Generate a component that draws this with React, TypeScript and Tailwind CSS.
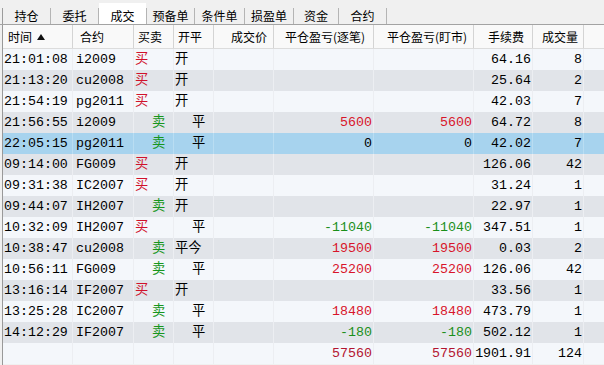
import React from 'react';

type Side = 'buy' | 'sell';
type Trade = {
  time?: string;
  symbol?: string;
  side?: Side;
  offset?: string;
  price?: string;
  pnlTrade?: number;
  pnlMarket?: number;
  fee: string;
  volume: number;
};

const tabs = [
  { label: '持仓', w: 'w-[47px]' },
  { label: '委托', w: 'w-[47px]' },
  { label: '成交', w: 'w-[47px]', active: true },
  { label: '预备单', w: 'w-[47px]' },
  { label: '条件单', w: 'w-[49px]' },
  { label: '损盈单', w: 'w-[48px]' },
  { label: '资金', w: 'w-[44px]' },
  { label: '合约', w: 'w-[47px]' },
];

const trades: Trade[] = [
  { time: '21:01:08', symbol: 'i2009', side: 'buy', offset: '开', fee: '64.16', volume: 8 },
  { time: '21:13:20', symbol: 'cu2008', side: 'buy', offset: '开', fee: '25.64', volume: 2 },
  { time: '21:54:19', symbol: 'pg2011', side: 'buy', offset: '开', fee: '42.03', volume: 7 },
  { time: '21:56:55', symbol: 'i2009', side: 'sell', offset: '平', pnlTrade: 5600, pnlMarket: 5600, fee: '64.72', volume: 8 },
  { time: '22:05:15', symbol: 'pg2011', side: 'sell', offset: '平', pnlTrade: 0, pnlMarket: 0, fee: '42.02', volume: 7 },
  { time: '09:14:00', symbol: 'FG009', side: 'buy', offset: '开', fee: '126.06', volume: 42 },
  { time: '09:31:38', symbol: 'IC2007', side: 'buy', offset: '开', fee: '31.24', volume: 1 },
  { time: '09:44:07', symbol: 'IH2007', side: 'sell', offset: '开', fee: '22.97', volume: 1 },
  { time: '10:32:09', symbol: 'IH2007', side: 'buy', offset: '平', pnlTrade: -11040, pnlMarket: -11040, fee: '347.51', volume: 1 },
  { time: '10:38:47', symbol: 'cu2008', side: 'sell', offset: '平今', pnlTrade: 19500, pnlMarket: 19500, fee: '0.03', volume: 2 },
  { time: '10:56:11', symbol: 'FG009', side: 'sell', offset: '平', pnlTrade: 25200, pnlMarket: 25200, fee: '126.06', volume: 42 },
  { time: '13:16:14', symbol: 'IF2007', side: 'buy', offset: '开', fee: '33.56', volume: 1 },
  { time: '13:25:28', symbol: 'IC2007', side: 'sell', offset: '平', pnlTrade: 18480, pnlMarket: 18480, fee: '473.79', volume: 1 },
  { time: '14:12:29', symbol: 'IF2007', side: 'sell', offset: '平', pnlTrade: -180, pnlMarket: -180, fee: '502.12', volume: 1 },
];

const total: Trade = { pnlTrade: 57560, pnlMarket: 57560, fee: '1901.91', volume: 124 };

const SELECTED = 4;

const pnlColor = (v: number | undefined, summary: boolean) => {
  if (v === undefined || v === 0) return 'text-black';
  if (v < 0) return 'text-[#1a8f1a]';
  return summary ? 'text-[#b3142f]' : 'text-[#d8142a]';
};

const Row = ({ t, index, summary = false }: { t: Trade; index: number; summary?: boolean }) => {
  const selected = index === SELECTED;
  const bg = selected ? 'bg-[#a7d3ee]' : index % 2 === 1 ? 'bg-[#e1e4e9]' : 'bg-[#f4f7fb]';
  const line = selected ? 'border-[#b9ddf2]' : 'border-[#eceef2]';
  return (
    <div className={`flex h-[21px] leading-[21px] whitespace-nowrap ${bg}`}>
      <div className={`w-[70px] pl-[1px] border-r ${line}`}>{t.time}</div>
      <div className={`w-[61px] pl-[3px] border-r ${line}`}>{t.symbol}</div>
      <div
        className={`w-[40px] border-r ${line} ${t.side === 'sell' ? 'pl-[18px] text-[#17961d]' : 'pl-[1px] text-[#d0122b]'}`}
      >
        {t.side === 'buy' ? '买' : t.side === 'sell' ? '卖' : ''}
      </div>
      <div className={`w-[40px] border-r ${line} ${t.offset === '平' ? 'pl-[18px]' : 'pl-[1px]'}`}>{t.offset}</div>
      <div className={`w-[60px] pr-[1px] text-right border-r ${line}`}>{t.price}</div>
      <div className={`w-[100px] pr-[1px] text-right border-r ${line} ${pnlColor(t.pnlTrade, summary)}`}>
        {t.pnlTrade}
      </div>
      <div className={`w-[100px] pr-[1px] text-right border-r ${line} ${pnlColor(t.pnlMarket, summary)}`}>
        {t.pnlMarket}
      </div>
      <div className={`w-[59px] pr-[1px] text-right border-r ${line}`}>{t.fee}</div>
      <div className={`w-[51px] pr-[1px] text-right border-r ${line}`}>{t.volume}</div>
      <div className="flex-1" />
    </div>
  );
};

export default function App() {
  return (
    <div className="w-[604px] h-[365px] bg-[#f0f0f0] overflow-hidden flex flex-col text-black">
      {/* tab strip */}
      <div className="h-[25px] flex items-end pl-[2px] border-b border-[#a3a3a3] font-['Noto_Sans_CJK_SC',sans-serif] text-[12px]">
        <div className="w-px h-[16px] bg-[#9c9c9c]" />
        {tabs.map((tab) => (
          <React.Fragment key={tab.label}>
            <div
              className={`${tab.w} h-[21px] pt-[5px] leading-[15px] text-center ${tab.active ? 'bg-white' : ''}`}
            >
              {tab.label}
            </div>
            <div className="w-px h-[16px] bg-[#b4b4b4]" />
          </React.Fragment>
        ))}
      </div>

      <div className="flex-1 ml-[2px] border-l border-[#999999] flex flex-col">
        {/* column headers */}
        <div className="flex h-[24px] leading-[23px] bg-[#f9f9f9] border-b border-[#dcdcdc] font-['Noto_Sans_CJK_SC',sans-serif] text-[12px] whitespace-nowrap">
          <div className="w-[70px] pl-[5px] border-r border-[#d4d4d4] flex items-center gap-[5px]">
            <span>时间</span>
            <svg width="8" height="6" viewBox="0 0 8 6">
              <polygon points="4,0 8,6 0,6" fill="#111" />
            </svg>
          </div>
          <div className="w-[61px] pl-[7px] border-r border-[#d4d4d4]">合约</div>
          <div className="w-[40px] pl-[4px] border-r border-[#d4d4d4]">买卖</div>
          <div className="w-[40px] pl-[4px] border-r border-[#d4d4d4]">开平</div>
          <div className="w-[60px] pr-[6px] text-right border-r border-[#d4d4d4]">成交价</div>
          <div className="w-[100px] pr-[8px] text-right border-r border-[#d4d4d4]">平仓盈亏(逐笔)</div>
          <div className="w-[100px] pr-[6px] text-right border-r border-[#d4d4d4]">平仓盈亏(盯市)</div>
          <div className="w-[59px] pr-[8px] text-right border-r border-[#d4d4d4]">手续费</div>
          <div className="w-[51px] pr-[5px] text-right border-r border-[#d4d4d4]">成交量</div>
          <div className="flex-1" />
        </div>

        {/* trade rows */}
        <div className="font-['Liberation_Mono','Noto_Sans_CJK_SC',monospace] text-[13.3px]">
          {trades.map((t, i) => (
            <Row key={i} t={t} index={i} />
          ))}
          <Row t={total} index={trades.length} summary />
        </div>
      </div>
    </div>
  );
}
